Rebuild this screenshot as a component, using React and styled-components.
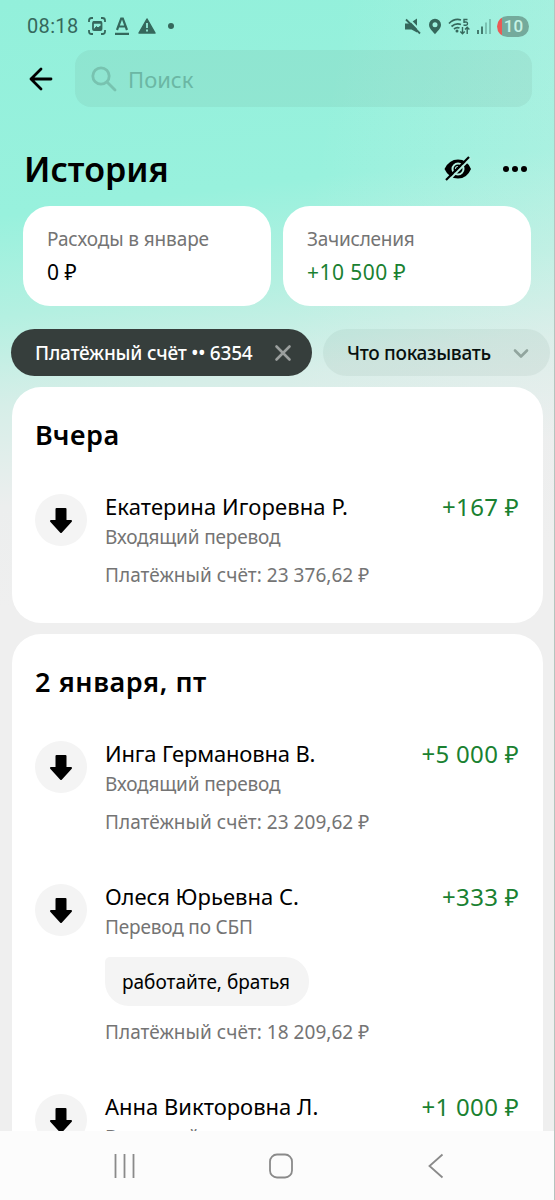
import React from "react";
import styled, { createGlobalStyle } from "styled-components";

const GlobalStyle = createGlobalStyle`
  * {
    box-sizing: border-box;
  }
  body {
    margin: 0;
    font-family: "Noto Sans", "Open Sans", sans-serif;
    color: #000;
  }
  svg {
    display: block;
    flex: none;
  }
`;

const Screen = styled.div`
  width: 555px;
  height: 1200px;
  overflow: hidden;
  display: flex;
  flex-direction: column;
  border-right: 1px solid #b5c4bf;
  background: linear-gradient(100deg, rgba(239, 239, 239, 0) 45%, rgba(239, 239, 239, 0.36) 100%),
    linear-gradient(
      173deg,
      #93f0db 0%,
      #98f1dd 17%,
      #b4f0e1 25%,
      #d6eee8 32%,
      #eceeee 40%,
      #efefef 48%
    );
`;

const StatusBar = styled.div`
  height: 50px;
  padding: 2px 25px 0 27px;
  display: flex;
  align-items: center;
  justify-content: space-between;
  color: #35685c;
`;

const StatusGroup = styled.div`
  display: flex;
  align-items: center;
  gap: ${(props) => props.$gap};
`;

const Clock = styled.div`
  font-family: Roboto, sans-serif;
  font-size: 20px;
  font-weight: 450;
  line-height: 24px;
  width: 52px;
  letter-spacing: 0.35px;
  white-space: nowrap;
`;

const Battery = styled.div`
  width: 32px;
  height: 21px;
  border-radius: 11px;
  padding-left: 1px;
  background: linear-gradient(90deg, #ea5b56 5px, #74aa9c 5px);
  color: #c5f3e6;
  font: 500 17px/21px Roboto, sans-serif;
  text-align: center;
`;

const SearchRow = styled.div`
  display: flex;
  align-items: center;
  gap: 22px;
  padding: 0 22px 0 29px;
  height: 57px;
`;

const SearchField = styled.div`
  flex: 1;
  height: 57px;
  border-radius: 16px;
  background: rgba(70, 80, 70, 0.07);
  display: flex;
  align-items: center;
  gap: 11px;
  padding-left: 16px;
  color: #6bb7a4;
`;

const Line = styled.div`
  font-size: ${(props) => props.$size};
  font-weight: ${(props) => props.$weight || 400};
  letter-spacing: ${(props) => props.$spacing || 0};
  line-height: ${(props) => props.$height || "24px"};
  color: ${(props) => props.$color || "inherit"};
  white-space: nowrap;
`;

const Heading = styled.div`
  height: 99px;
  padding: 25px 27px 0 24px;
  display: flex;
  align-items: center;
  justify-content: space-between;
`;

const Actions = styled.div`
  display: flex;
  align-items: center;
  gap: 31px;
`;

const Totals = styled.div`
  display: grid;
  grid-template-columns: 248px 248px;
  gap: 12px;
  padding-left: 23px;
`;

const Total = styled.div`
  height: 100px;
  padding: 21px 24px;
  border-radius: 27px;
  background: #fff;
  display: flex;
  flex-direction: column;
  gap: 9px;
`;

const Filters = styled.div`
  display: flex;
  gap: 11px;
  padding: 23px 0 11px 11px;
`;

const Chip = styled.div`
  height: 47px;
  width: ${(props) => props.$width};
  flex: none;
  padding: 0 20px 0 24px;
  border-radius: 24px;
  display: flex;
  align-items: center;
  justify-content: space-between;
  background: ${(props) => (props.$active ? "#363e3c" : "rgba(80, 110, 100, 0.08)")};
  color: ${(props) => (props.$active ? "#fff" : "#08100e")};
`;

const Feed = styled.div`
  height: 744px;
  overflow: hidden;
  display: flex;
  flex-direction: column;
  gap: 11px;
  padding: 0 11px 0 12px;
`;

const Day = styled.section`
  flex: none;
  height: ${(props) => props.$height};
  padding: 30px 24px 0 23px;
  border-radius: 29px;
  background: #fff;
`;

const Operations = styled.div`
  margin-top: 35px;
  display: flex;
  flex-direction: column;
  gap: 44px;
`;

const Operation = styled.div`
  display: flex;
  align-items: flex-start;
`;

const Badge = styled.div`
  width: 52px;
  height: 52px;
  margin: 6px 18px 0 0;
  padding-top: 2px;
  border-radius: 50%;
  background: #f4f4f4;
  display: flex;
  align-items: center;
  justify-content: center;
`;

const Details = styled.div`
  flex: 1;
  display: flex;
  flex-direction: column;
`;

const Message = styled.div`
  width: 204px;
  height: 49px;
  margin: 18px 0 0;
  padding-left: 17px;
  border-radius: 5px 24px 24px 24px;
  background: #f4f4f4;
  display: flex;
  align-items: center;
`;

const Spacer = styled.div`
  height: ${(props) => props.$height};
`;

const NavBar = styled.div`
  flex: 1;
  padding: 0 110px 0 113px;
  background: #fcfcfc;
  display: grid;
  grid-template-columns: 155px 1fr auto;
  align-items: center;
`;

const days = [
  {
    title: "Вчера",
    spacing: "0.5px",
    height: "236px",
    items: [
      {
        name: "Екатерина Игоревна Р.",
        spacing: "0.1px",
        kind: "Входящий перевод",
        balance: "23 376,62 ₽",
        amount: "+167 ₽",
      },
    ],
  },
  {
    title: "2 января, пт",
    spacing: "0.6px",
    height: "700px",
    items: [
      {
        name: "Инга Германовна В.",
        spacing: "-0.17px",
        kind: "Входящий перевод",
        balance: "23 209,62 ₽",
        amount: "+5 000 ₽",
      },
      {
        name: "Олеся Юрьевна С.",
        kind: "Перевод по СБП",
        message: "работайте, братья",
        balance: "18 209,62 ₽",
        amount: "+333 ₽",
      },
      { name: "Анна Викторовна Л.", kind: "Входящий перевод", amount: "+1 000 ₽" },
    ],
  },
];

const ArrowDown = () => (
  <svg width="24" height="28" viewBox="0 0 24 28">
    <path
      d="M7.500 2h9v12H22L12 25 2 14h5.500Z"
      fill="#000"
      stroke="#000"
      strokeWidth="2"
      strokeLinejoin="round"
    />
  </svg>
);

const Status = () => (
  <StatusBar>
    <StatusGroup $gap="9px">
      <Clock>08:18</Clock>
      <svg width="18" height="18" viewBox="0 0 18 18" fill="none" stroke="currentColor" strokeWidth="1.8">
        <path d="M1 5V3.500Q1 1 3.500 1H5M13 1h1.500Q17 1 17 3.500V5M17 13v1.500q0 2.500-2.500 2.500H13M5 17H3.500Q1 17 1 14.500V13" />
        <rect x="5" y="5" width="8.500" height="8" rx="1" />
        <path d="M5 5.500h8.500" strokeWidth="2.500" />
        <path d="m6 12.500 2.500-3 1.500 1.500L12.500 9v3.500Z" fill="currentColor" strokeWidth="1" />
      </svg>
      <svg width="14" height="18" viewBox="0 0 14 18" fill="none" stroke="currentColor" strokeWidth="2.200">
        <path d="M2 13 6.200 1.500h1.600L12 13M3.500 9.500h7M0 16.800h14" />
      </svg>
      <svg width="18" height="16" viewBox="0 0 18 16">
        <path d="M9 1 17 15H1Z" fill="currentColor" stroke="currentColor" strokeWidth="1.500" strokeLinejoin="round" />
        <path d="M9 5v5M9 11.500v2" stroke="#94eeda" strokeWidth="1.800" />
      </svg>
      <svg width="12" height="6" viewBox="0 0 12 6">
        <circle cx="6" cy="3" r="3" fill="currentColor" />
      </svg>
    </StatusGroup>
    <StatusGroup $gap="6.5px">
      <svg width="16" height="17" viewBox="0 0 16 17">
        <path d="M0 5.500h4.500L12 .5v14L6.500 11.500H0Z" fill="currentColor" />
        <path d="M3 0 16 13.500" stroke="#9aeedb" strokeWidth="2" />
        <path d="M1 1.500 15 15.500" stroke="currentColor" strokeWidth="1.800" />
      </svg>
      <svg width="14" height="17" viewBox="0 0 14 17">
        <path
          d="M7 .8a6 6 0 0 0-6 6c0 4 4 6.700 6 9.500 2-2.800 6-5.500 6-9.500a6 6 0 0 0-6-6Zm0 3.500a2.500 2.500 0 1 1 0 5 2.500 2.500 0 0 1 0-5Z"
          fill="currentColor"
          fillRule="evenodd"
        />
      </svg>
      <svg width="22" height="17" viewBox="0 0 22 17" fill="none" stroke="currentColor" strokeWidth="1.700">
        <path d="M1 5.500Q6.500 0 13 2M3.500 8.500Q8 4.500 13 6.500M6 11q2.500-2.200 5.500-1" />
        <circle cx="9" cy="13" r="1.500" fill="currentColor" stroke="none" />
        <path d="M19.500 1.500H16v2.700q3.500-.8 3.500 1.500T15.500 7" strokeWidth="1.400" />
        <path d="M14.500 9v6.500m-2.200-2 2.200 2.200 2.200-2.200M19.200 16V9.500M17 11.500l2.200-2.200 2.200 2.200" strokeWidth="1.400" />
      </svg>
      <svg width="14" height="16" viewBox="0 0 14 16" fill="none" stroke="currentColor" strokeWidth="1.700">
        <path d="M1 12v4M5 8.500V16" />
        <path d="M9 4.500V16M13 1v15" opacity=".4" />
      </svg>
      <Battery>10</Battery>
    </StatusGroup>
  </StatusBar>
);

const OperationRow = ({ item }) => (
  <Operation>
    <Badge>
      <ArrowDown />
    </Badge>
    <Details>
      <Line $size="22px" $height="36px" $spacing={item.spacing}>{item.name}</Line>
      <Spacer $height="1px" />
      <Line $size="19px" $spacing="-0.17px" $color="#747474">{item.kind}</Line>
      {item.message ? (
        <Message>
          <Line $size="19px">{item.message}</Line>
        </Message>
      ) : null}
      {item.balance ? (
        <>
          <Spacer $height="14px" />
          <Line $size="19px" $spacing="0.04px" $color="#747474">Платёжный счёт: {item.balance}</Line>
        </>
      ) : null}
    </Details>
    <Line $size="24px" $height="37px" $spacing="0.3px" $color="#1a8131">{item.amount}</Line>
  </Operation>
);

const App = () => {
  return (
    <>
      <GlobalStyle />
      <Screen>
        <Status />
        <SearchRow>
          <svg width="24" height="24" viewBox="0 0 24 24" fill="none" stroke="#000" strokeWidth="2.800" strokeLinecap="round" strokeLinejoin="round">
            <path d="M22 12H2M12 2 2 12l10 10" />
          </svg>
          <SearchField>
            <svg width="26" height="26" viewBox="0 0 26 26" fill="none" stroke="#78c3b0" strokeWidth="2.800" strokeLinecap="round">
              <circle cx="10" cy="10" r="8.200" />
              <path d="m16.500 16.500 7.500 7.500" />
            </svg>
            <Line $size="22px">Поиск</Line>
          </SearchField>
        </SearchRow>
        <Heading>
          <Line $size="34px" $weight={600} $height="44px">История</Line>
          <Actions>
            <svg width="28" height="26" viewBox="0 0 28 26">
              <path d="M.5 13Q5 3.500 14 3.500T27 13Q23 22.500 14 22.500T.5 13Z" fill="#000" />
              <circle cx="14" cy="13" r="5.500" fill="none" stroke="#b3f0e1" strokeWidth="2" />
              <path d="M14 10.500a2.500 2.500 0 0 0-2.500 2.500" fill="none" stroke="#b3f0e1" strokeWidth="1.200" />
              <path d="M4 25 27 2" stroke="#b3f0e1" strokeWidth="2" />
              <path d="M2 24 25 1" stroke="#000" strokeWidth="2.200" />
            </svg>
            <svg width="24" height="6" viewBox="0 0 24 6">
              <circle cx="3" cy="3" r="3" />
              <circle cx="12" cy="3" r="3" />
              <circle cx="21" cy="3" r="3" />
            </svg>
          </Actions>
        </Heading>
        <Totals>
          <Total>
            <Line $size="19px" $spacing="-0.12px" $color="#747474">Расходы в январе</Line>
            <Line $size="21px">0 ₽</Line>
          </Total>
          <Total>
            <Line $size="19px" $spacing="-0.25px" $color="#747474">Зачисления</Line>
            <Line $size="21px" $spacing="0.45px" $color="#1a8131">+10 500 ₽</Line>
          </Total>
        </Totals>
        <Filters>
          <Chip $active $width="301px">
            <Line $size="19px" $weight={500} $spacing="-0.22px">Платёжный счёт •• 6354</Line>
            <svg width="18" height="18" viewBox="0 0 18 18">
              <path d="m2.500 2.500 13 13m0-13-13 13" stroke="#9b9f9e" strokeWidth="2.600" strokeLinecap="round" />
            </svg>
          </Chip>
          <Chip $width="227px">
            <Line $size="19px" $weight={500} $spacing="-0.3px">Что показывать</Line>
            <svg width="18" height="18" viewBox="0 0 18 18" fill="none">
              <path d="m3 6.500 6 6 6-6" stroke="#91a59e" strokeWidth="2.600" strokeLinecap="round" strokeLinejoin="round" />
            </svg>
          </Chip>
        </Filters>
        <Feed>
          {days.map((day) => (
            <Day key={day.title} $height={day.height}>
              <Line $size="27px" $weight={600} $height="36px" $spacing={day.spacing}>{day.title}</Line>
              <Operations>
                {day.items.map((item) => (
                  <OperationRow key={item.name} item={item} />
                ))}
              </Operations>
            </Day>
          ))}
        </Feed>
        <NavBar>
          <svg width="24" height="24" viewBox="0 0 24 24" stroke="#8a8a8a" strokeWidth="1.800">
            <path d="M2.500 0v24M11.500 0v24M20.500 0v24" />
          </svg>
          <svg width="26" height="26" viewBox="0 0 26 26">
            <rect x="2" y="1.500" width="22" height="23" rx="7" fill="none" stroke="#8a8a8a" strokeWidth="1.800" />
          </svg>
          <svg width="16" height="26" viewBox="0 0 16 26">
            <path d="M14.500 1.500 1.500 13l13 11.500" fill="none" stroke="#8a8a8a" strokeWidth="1.800" />
          </svg>
        </NavBar>
      </Screen>
    </>
  );
};

export default App;
